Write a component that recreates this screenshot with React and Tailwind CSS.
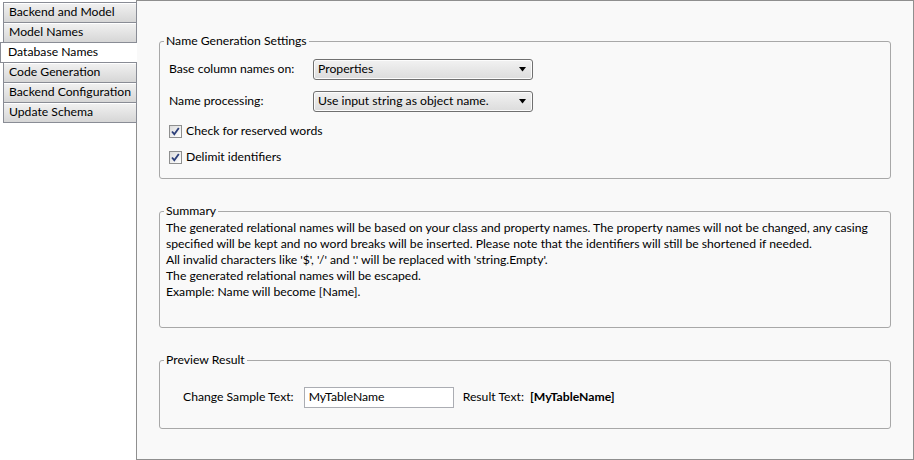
import React from "react";

const tabs = [
  "Backend and Model",
  "Model Names",
  "Database Names",
  "Code Generation",
  "Backend Configuration",
  "Update Schema",
];

function Combo({ value }) {
  return (
    <div className="flex h-[21px] w-[220px] items-center justify-between rounded-[3px] border border-[#707070] bg-gradient-to-b from-[#f2f2f2] to-[#dcdcdc] pl-[4px] pr-[5px] shadow-[inset_0_0_0_1px_#fcfcfc]">
      <span className="leading-none">{value}</span>
      <svg width="8" height="5" viewBox="0 0 8 5">
        <path d="M0 0 L7 0 L3.5 4.5 Z" fill="#000" />
      </svg>
    </div>
  );
}

function Check({ label }) {
  return (
    <div className="flex h-[16px] items-center gap-[4px]">
      <div className="flex h-[13px] w-[13px] items-center justify-center border border-[#8e8f8f] bg-gradient-to-br from-[#dcdcdc] to-[#ffffff]">
        <svg width="9" height="9" viewBox="0 0 9 9">
          <path d="M1 4.5 L3.3 7.2 L7.8 1" stroke="#2c3f7a" strokeWidth="1.8" fill="none" />
        </svg>
      </div>
      <span>{label}</span>
    </div>
  );
}

function Group({ title, className, children }) {
  return (
    <fieldset className={"rounded-[3px] border border-[#a8a8a8] " + className}>
      <legend className="ml-[4px] px-[2px] leading-[16px]">{title}</legend>
      {children}
    </fieldset>
  );
}

export default function App() {
  return (
    <div
      className="flex h-[460px] w-[914px] bg-white text-[12.2px] text-black"
      style={{ fontFamily: "Lato, 'Noto Sans', sans-serif" }}
    >
      <div className="relative z-10 flex w-[137px] flex-col pt-[2px]">
        {tabs.map((t, i) =>
          t === "Database Names" ? (
            <div
              key={t}
              className="-mt-px flex h-[21px] items-center whitespace-nowrap border-y border-l border-[#898c95] bg-white pl-[7px]"
            >
              {t}
            </div>
          ) : (
            <div
              key={t}
              className={
                "ml-[3px] flex h-[21px] items-center whitespace-nowrap border border-[#898c95] bg-gradient-to-b from-[#f2f2f2] to-[#d6d6d6] pl-[5px] shadow-[inset_0_1px_0_#ffffff] " +
                (i === 0 ? "" : "-mt-px")
              }
            >
              {t}
            </div>
          )
        )}
      </div>
      <div className="-ml-px flex flex-1 flex-col border border-[#8f8f8f] bg-[#f9f9f9] px-[22px] pt-[32px]">
        <Group title="Name Generation Settings" className="h-[146px]">
          <div className="pl-[9px]">
            <div className="mt-[10px] flex items-center">
              <span className="w-[144px]">Base column names on:</span>
              <Combo value="Properties" />
            </div>
            <div className="mt-[11px] flex items-center">
              <span className="w-[144px]">Name processing:</span>
              <Combo value="Use input string as object name." />
            </div>
            <div className="mt-[11px]">
              <Check label="Check for reserved words" />
            </div>
            <div className="mt-[10px]">
              <Check label="Delimit identifiers" />
            </div>
          </div>
        </Group>
        <Group title="Summary" className="mt-[24px] h-[125px]">
          <div className="px-[6px] pt-[1px] leading-[16px]">
            The generated relational names will be based on your class and property names. The property names will not be changed, any casing specified will be kept and no word breaks will be inserted. Please note that the identifiers will still be shortened if needed.
            <br />
            All invalid characters like '$', '/' and '.' will be replaced with 'string.Empty'.
            <br />
            The generated relational names will be escaped.
            <br />
            Example: Name will become [Name].
          </div>
        </Group>
        <Group title="Preview Result" className="mt-[24px] h-[77px]">
          <div className="mt-[19px] flex items-center pl-[23px]">
            <span>Change Sample Text:</span>
            <div className="ml-[10px] flex h-[21px] w-[150px] items-center border border-[#abadb3] bg-white pl-[4px]">
              MyTableName
            </div>
            <span className="ml-[9px]">Result Text:</span>
            <span className="ml-[6px] font-bold">[MyTableName]</span>
          </div>
        </Group>
      </div>
    </div>
  );
}
